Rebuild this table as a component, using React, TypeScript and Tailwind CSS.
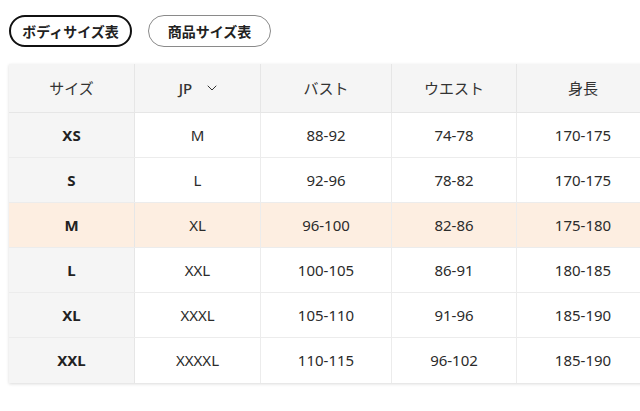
import { ChevronDown } from "lucide-react";

const rows = [
  ["XS", "M", "88-92", "74-78", "170-175"],
  ["S", "L", "92-96", "78-82", "170-175"],
  ["M", "XL", "96-100", "82-86", "175-180"],
  ["L", "XXL", "100-105", "86-91", "180-185"],
  ["XL", "XXXL", "105-110", "91-96", "185-190"],
  ["XXL", "XXXXL", "110-115", "96-102", "185-190"],
];

const widths = ["w-[126px]", "w-[126px]", "w-[131px]", "w-[125px]", "w-[132px]"];

export default function App() {
  return (
    <div
      className="h-[411px] w-[640px] overflow-hidden bg-white text-[#2b2b2b]"
      style={{ fontFamily: '"Noto Sans", "Noto Sans CJK JP", sans-serif' }}
    >
      <div className="flex gap-4 pl-[9px] pt-[15px]">
        <button
          type="button"
          className="flex h-[32px] w-[123px] items-center justify-center rounded-full border-2 border-[#111] text-[14px] font-semibold text-[#222]"
        >
          ボディサイズ表
        </button>
        <button
          type="button"
          className="flex h-[32px] w-[123px] items-center justify-center rounded-full border border-[#8a8a8a] text-[14px] font-semibold text-[#222]"
        >
          商品サイズ表
        </button>
      </div>

      <div className="ml-[9px] mt-[17px] w-[640px] shadow-[0_1px_3px_rgba(0,0,0,0.15)]">
        <div className="flex h-[49px] border-b border-[#e6e6e6] bg-[#f5f5f5] text-[15px] text-[#333]">
          <div className={`${widths[0]} flex items-center justify-center border-r border-[#e6e6e6]`}>サイズ</div>
          <div className={`${widths[1]} flex items-center justify-center gap-3 border-r border-[#e6e6e6] pl-1`}>
            <span className="font-medium">JP</span>
            <ChevronDown className="h-4 w-4" strokeWidth={1.5} />
          </div>
          <div className={`${widths[2]} flex items-center justify-center border-r border-[#e6e6e6]`}>バスト</div>
          <div className={`${widths[3]} flex items-center justify-center border-r border-[#e6e6e6]`}>ウエスト</div>
          <div className={`${widths[4]} flex items-center justify-center`}>身長</div>
        </div>
        {rows.map((r, i) => {
          const hl = r[0] === "M";
          return (
            <div
              key={r[0]}
              className={`flex h-[45px] text-[15px] ${i < rows.length - 1 ? "border-b border-[#ececec]" : ""} ${hl ? "bg-[#fdeee1]" : "bg-white"}`}
            >
              <div
                className={`${widths[0]} flex items-center justify-center border-r border-[#e6e6e6] font-bold text-[#222] ${hl ? "" : "bg-[#f5f5f5]"}`}
              >
                {r[0]}
              </div>
              {r.slice(1).map((c, j) => (
                <div
                  key={j}
                  className={`${widths[j + 1]} flex items-center justify-center ${j < 3 ? "border-r border-[#ececec]" : ""}`}
                >
                  {c}
                </div>
              ))}
            </div>
          );
        })}
      </div>
    </div>
  );
}
